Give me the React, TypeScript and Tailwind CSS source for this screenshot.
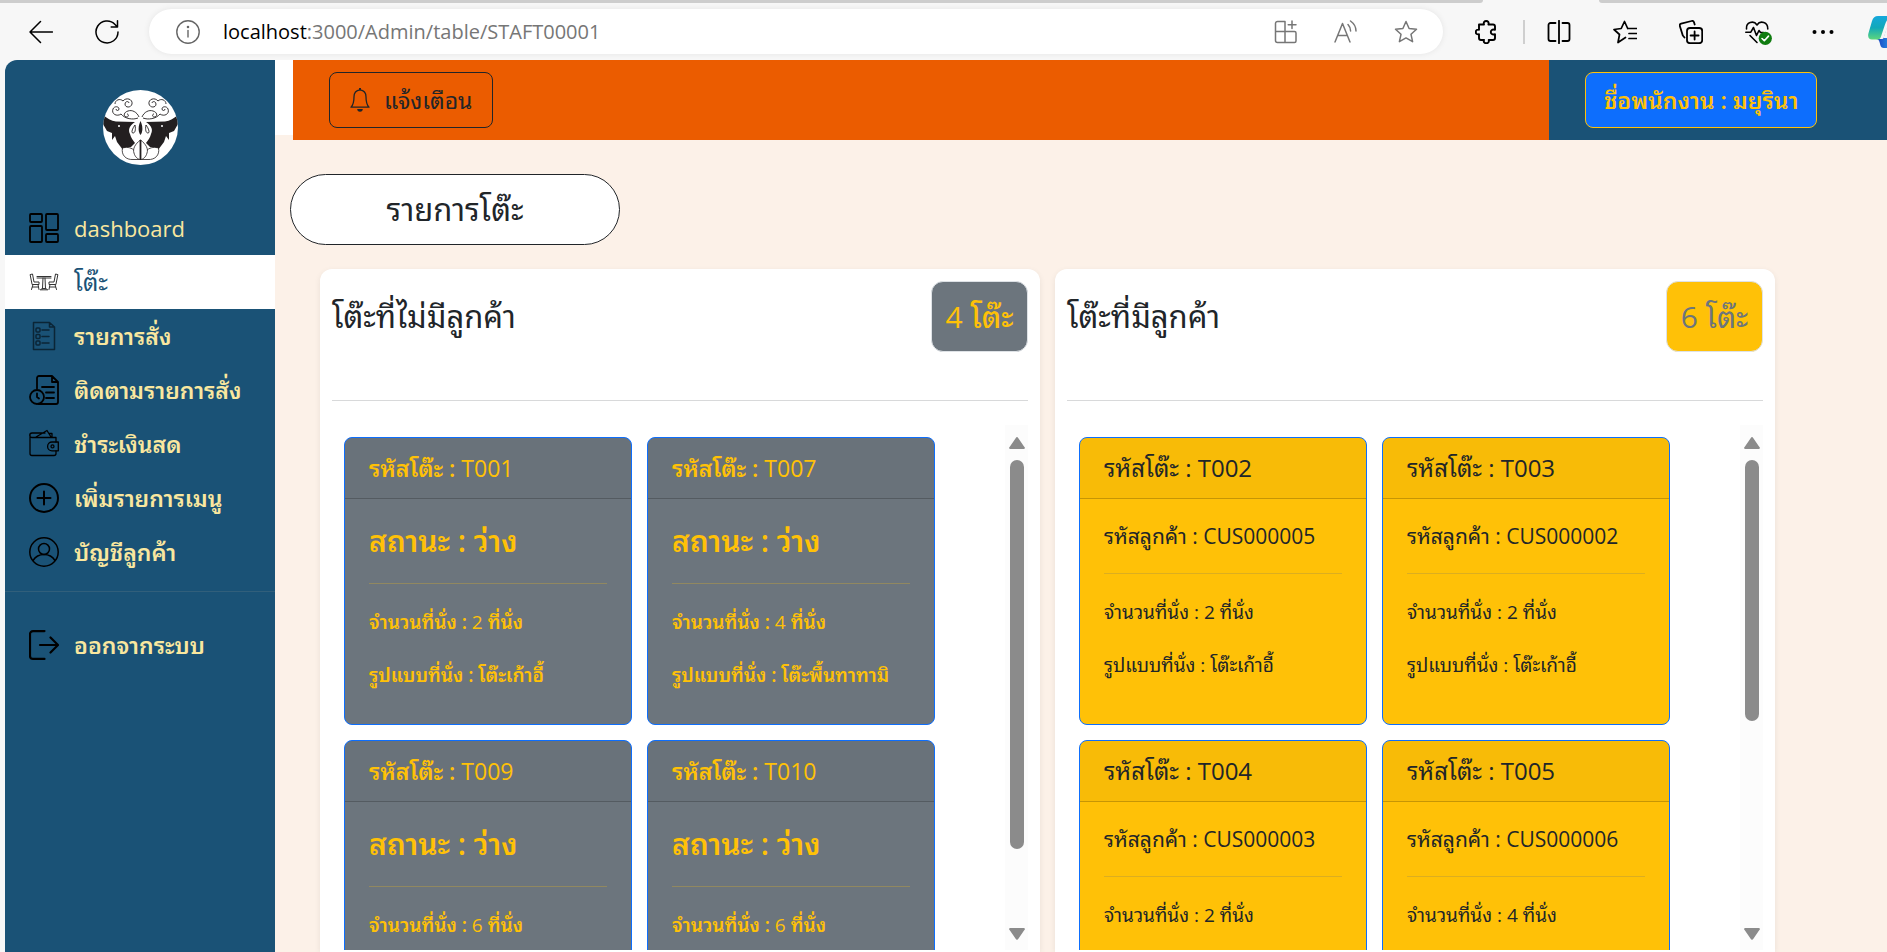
import type { ReactNode } from "react";

type IconProps = { children: ReactNode; className?: string; viewBox?: string; width?: number };

function Icon({ children, className = "size-6", viewBox = "0 0 24 24", width = 1.5 }: IconProps) {
  return (
    <svg
      className={`shrink-0 ${className}`}
      viewBox={viewBox}
      fill="none"
      stroke="currentColor"
      strokeWidth={width}
      strokeLinecap="round"
      strokeLinejoin="round"
      aria-hidden="true"
    >
      {children}
    </svg>
  );
}

const STAR = "M12 1.5l3.100 7 7.400.800-5.500 5 1.600 7.400-6.600-3.800-6.600 3.800 1.600-7.400-5.500-5 7.400-.800z";

function ToolButton({ label, children, className = "" }: { label: string; children: ReactNode; className?: string }) {
  return (
    <button type="button" aria-label={label} className={`flex shrink-0 ${className}`}>
      {children}
    </button>
  );
}

function BrowserBar() {
  return (
    <header className="shrink-0 bg-[#f7f7f7]">
      <div className="flex h-[3px] bg-[#f7f7f7]">
        <div className="flex-1 rounded-br-[3px] bg-[#cdcdcd]" />
        <div className="w-[116px]" />
        <div className="w-[288px] rounded-bl-[3px] bg-[#cdcdcd]" />
      </div>
      <div className="flex h-[57px] items-center overflow-hidden text-black">
        <div className="flex gap-[42px] pr-[30px] pl-[29px]">
          <ToolButton label="Back">
            <Icon>
              <path d="M23.500 12H1M11.500 1.500 1 12l10.500 10.500" />
            </Icon>
          </ToolButton>
          <ToolButton label="Refresh">
            <Icon>
              <path d="M23 12A11 11 0 1 1 20 4.400L22.500 7M22.500.800V7h-6.300" />
            </Icon>
          </ToolButton>
        </div>
        <div className="flex h-[45px] min-w-0 flex-1 items-center rounded-full bg-white pr-[25px] pl-[27px] shadow-[0_0_6px_rgba(0,0,0,0.08)]">
          <Icon className="size-6 text-[#666]" width={1.4}>
            <circle cx="12" cy="12" r="11.200" />
            <path d="M12 10.500v6.500" />
            <circle cx="12" cy="7" r=".600" fill="currentColor" />
          </Icon>
          <p className="ml-[23px] min-w-0 flex-1 truncate text-[20px] text-[#767676]">
            <span className="text-black">localhost</span>:3000/Admin/table/STAFT00001
          </p>
          <div className="flex gap-9 text-[#767676]">
            <ToolButton label="Apps">
              <Icon>
                <path d="M1.500 11.500V3.500a2 2 0 0 1 2-2H11v21H3.500a2 2 0 0 1-2-2v-9H20.500a1.500 1.500 0 0 1 1.500 1.500v8a1.500 1.500 0 0 1-1.500 1.500H11M18 1v7.500M14.200 4.700h7.800" />
              </Icon>
            </ToolButton>
            <ToolButton label="Read aloud">
              <Icon>
                <path d="M1 22 8.500 3.500 16 22M3.700 15.500h9.600M14 4.500c1.700 1.800 2.600 4 2.600 6.500M16.500 1c3.500 2.500 5.500 6 5.500 10" />
              </Icon>
            </ToolButton>
            <ToolButton label="Favorite">
              <Icon>
                <path d={STAR} />
              </Icon>
            </ToolButton>
          </div>
        </div>
        <div className="flex items-center pl-8">
          <ToolButton label="Extensions">
            <Icon width={1.900}>
              <path d="M4 4.500h5c-.8-2.200.6-3.500 2.200-3.500s3 1.300 2.200 3.500H18a2 2 0 0 1 2 2v3.300c-2.800-.9-4.200.5-4.200 2.200s1.400 3.100 4.200 2.200V18a2 2 0 0 1-2 2h-4.300c.7 2-.7 3.300-2.400 3.300S8.200 22 9 20H6a2 2 0 0 1-2-2v-3.700C1.800 14.800.8 13.500.8 12S1.800 9.200 4 9.700z" />
            </Icon>
          </ToolButton>
          <div className="mr-[22px] ml-6 h-6 w-0.5 bg-[#cfcfcf]" />
          <div className="flex gap-[42px]">
            <ToolButton label="Split screen">
              <Icon width={1.800}>
                <path d="M12 .800v22.400M8.500 3H3.500a2 2 0 0 0-2 2v14a2 2 0 0 0 2 2h5M15.500 3h5a2 2 0 0 1 2 2v14a2 2 0 0 1-2 2h-5" />
              </Icon>
            </ToolButton>
            <ToolButton label="Favorites list">
              <Icon width={1.700}>
                <path d="M12.500 17.500 5 22.500l1.500-8L1 9.500l7.200-1L11.500 1.500l3.200 7M15.500 8.500h8M16 13.500h7.500M16 18.500h7.500" />
              </Icon>
            </ToolButton>
            <ToolButton label="Collections">
              <Icon width={1.800}>
                <rect x="8" y="8" width="15.200" height="15.200" rx="3" />
                <path d="M15.600 11.500v8M11.600 15.500h8M5.500 17.500 3.800 15.500.900 6.200a2 2 0 0 1 1.300-2.500L12.500 1a2 2 0 0 1 2.500 1.300L15.700 4.500" />
              </Icon>
            </ToolButton>
            <ToolButton label="Browser essentials">
              <Icon className="size-6 overflow-visible" width={1.600}>
                <path d="M1.500 9C.8 2.500 8.500-.2 12 5c3.500-5.200 11-2.500 10.800 4M.800 12.200h5L8.500 7.500l3 8 2.500-5 1.500 2h3M5 15.500l7 7" />
                <circle cx="20.300" cy="18.300" r="6.600" fill="#107c10" stroke="none" />
                <path d="m17 18.500 2.300 2.200 4.200-4.600" stroke="#fff" />
              </Icon>
            </ToolButton>
            <ToolButton label="Settings and more">
              <svg className="size-6" viewBox="0 0 24 24" aria-hidden="true">
                <circle cx="3.500" cy="12" r="2" />
                <circle cx="12" cy="12" r="2" />
                <circle cx="20.500" cy="12" r="2" />
              </svg>
            </ToolButton>
          </div>
          <ToolButton label="Copilot" className="ml-[33px] w-[19px] overflow-hidden">
            <svg className="h-8 w-10 shrink-0" viewBox="0 0 40 32" aria-hidden="true">
              <defs>
                <linearGradient id="wing" x1="0" y1="0" x2="0" y2="1">
                  <stop offset="0" stopColor="#16a7dc" />
                  <stop offset="0.500" stopColor="#12a9b9" />
                  <stop offset="1" stopColor="#5dd67c" />
                </linearGradient>
                <linearGradient id="tail" x1="0" y1="0" x2="1" y2="0">
                  <stop offset="0" stopColor="#1b3fbf" />
                  <stop offset="1" stopColor="#2aa8f0" />
                </linearGradient>
              </defs>
              <path d="M8 23c2 0 3 1 3.500 3l.8 3c.5 2 1.500 3 3.500 3H27V12h-8l-3 9c-.5 1.500-1 2-2.500 2z" fill="url(#tail)" />
              <path d="M10 0h18l-7 2.500c-2 1-3 3-4 6l-4 12c-.5 1.800-1.500 3-3.500 3H4c-3 0-4.500-2-3.600-6L4 5c1-3.500 3-5 6-5z" fill="url(#wing)" />
              <path d="m19.500 9-4 13h12V9z" fill="#f7f7f7" />
            </svg>
          </ToolButton>
        </div>
      </div>
    </header>
  );
}

function Logo() {
  const half = (
    <g>
      <path
        d="M0 25C4 28 8 31 13 31.500L32 32C26 36 25 40 27 44 28 48 30 50 32 53L28 57C24 57 21 58 20 60L14 52 12 46 9 50 9 43 4 41 0 34z"
        fill="#231f20"
      />
      <circle cx="16" cy="36" r="1" fill="#fff" />
      <g fill="none" stroke="#231f20" strokeWidth=".900">
        <path d="M36 27C34 22 29 19.500 25 21c-4 1-5 5-2 6 3 .5 3-3 1-3M35 28C30 30 22 29 18 24c-4 3-10 0-8-5 1-3 6-3 6 0 0 2-3 2-3 0M12 14c0-4 5-6 8-3 3-4 10-2 9 3-1 4-7 4-7 0 0-3 4-3 4-1" />
        <path d="M32 35c-3 4-4 8-2 8s3-3 2-8z" />
      </g>
      <g fill="#fff" stroke="#231f20" strokeWidth=".800">
        <path d="M19.500 58C18 65 23 70 30 69.500L37 69.500 31 60C27 57 23 57 19.500 58z" />
        <path d="M37.500 50C32 54 29.500 59 31 63c1 4 4 6.500 6.500 6.500" />
      </g>
    </g>
  );
  return (
    <svg className="size-[75px]" viewBox="0 0 75 75" role="img" aria-label="Logo">
      <defs>
        <clipPath id="disc">
          <circle cx="37.500" cy="37.500" r="37.500" />
        </clipPath>
      </defs>
      <g clipPath="url(#disc)">
        <rect width="75" height="75" fill="#fff" />
        {half}
        <g transform="matrix(-1 0 0 1 75 0)">{half}</g>
        <path d="M37.500 31c-2.500 5-2.500 11 0 14 2.500-3 2.500-9 0-14z" fill="#231f20" />
        <path d="M37.500 50v20" stroke="#231f20" strokeWidth="1.800" />
      </g>
    </svg>
  );
}

const navIcons: Record<string, ReactNode> = {
  dashboard: (
    <Icon className="size-[30px]" viewBox="0 0 30 30" width={1.800}>
      <rect x="1" y="1" width="12" height="8" rx="1" />
      <rect x="17" y="1" width="12" height="16" rx="1" />
      <rect x="1" y="13" width="12" height="16" rx="1" />
      <rect x="17" y="21" width="12" height="8" rx="1" />
    </Icon>
  ),
  table: (
    <Icon className="size-[30px] text-[#333]" viewBox="0 0 30 30" width={1}>
      <path d="M1.500 7.500 3.500 7l1.500 8h5v2.500H3.500zM28.500 7.500l-2-.5-1.500 8h-5v2.500h6.500zM4 17.500l-1.500 5M9 17.500l1 5M3.500 20h6M26 17.500l1.500 5M21 17.500l-1 5M20.500 20h6" />
      <path d="M8 9.500h14M8 11h14M14 11l-.500 10.500M16 11l.500 10.500M11.500 22.500c1-1.500 6-1.500 7 0z" />
    </Icon>
  ),
  orders: (
    <Icon className="size-[30px] text-[#0b2536]" viewBox="0 0 30 30" width={1.500}>
      <path d="M4.500 1.500h16L25.500 6v22.500h-21zM20.500 1.500V6h5M13 9h7M13 15.500h7M13 22h7" />
      <rect x="7" y="7" width="4" height="4" rx="1" />
      <rect x="7" y="13.500" width="4" height="4" rx="1" />
      <rect x="7" y="20" width="4" height="4" rx="1" />
    </Icon>
  ),
  track: (
    <Icon className="size-[30px]" viewBox="0 0 30 30" width={1.800}>
      <path d="M8 13.500V3a2 2 0 0 1 2-2h13l6 6v20a2 2 0 0 1-2 2H9.500M23 1v6h6M13 12h12M17 17.500h8M17 23h8" />
      <circle cx="8" cy="22" r="7" />
      <path d="M8 18.500V22l2 1.500" />
    </Icon>
  ),
  cash: (
    <Icon className="size-[30px]" viewBox="0 0 30 30" width={1.300}>
      <path d="M27 13V8.500H3a2 2 0 0 1 0-4.500h13M1 6v18.500a2 2 0 0 0 2 2h22a2 2 0 0 0 2-2V22M7 8l11-6.500L22 8M20 4.500h3V8" />
      <path d="M29.300 13H23a4.400 4.400 0 0 0 0 8.800h6.300z" />
      <circle cx="23.500" cy="17.400" r="1.500" />
    </Icon>
  ),
  add: (
    <Icon className="size-[30px]" viewBox="0 0 30 30" width={2}>
      <circle cx="15" cy="15" r="14" />
      <path d="M15 8.500v13M8.500 15h13" />
    </Icon>
  ),
  account: (
    <Icon className="size-[30px]" viewBox="0 0 30 30" width={1.500}>
      <circle cx="15" cy="15" r="14.200" />
      <circle cx="15" cy="12" r="5.500" />
      <path d="M4 23.500c5-8 17-8 22 0" />
    </Icon>
  ),
  logout: (
    <Icon className="size-[30px]" viewBox="0 0 30 30" width={2.200}>
      <path d="M15.500 1.100H4a3 3 0 0 0-3 3v21.800a3 3 0 0 0 3 3h11.500M11 15h18M21.500 7.500 29 15l-7.500 7.500" />
    </Icon>
  ),
};

function NavLink({ icon, label, className }: { icon: string; label: string; className: string }) {
  return (
    <a href="#" className={`flex h-[54px] items-center gap-[15px] pl-6 ${className}`}>
      <span className="text-black">{navIcons[icon]}</span>
      {label}
    </a>
  );
}

const navItem = "text-[23px] font-semibold text-[#f9e79f]";

function Sidebar() {
  return (
    <aside className="w-[270px] shrink-0 rounded-tl-xl bg-[#1a5276] pt-[30px]">
      <div className="flex justify-center">
        <Logo />
      </div>
      <nav className="mt-9">
        <NavLink icon="dashboard" label="dashboard" className="text-[22px] text-[#f9e79f]" />
        <NavLink icon="table" label="โต๊ะ" className="bg-white text-[24px] text-[#1a5276]" />
        <NavLink icon="orders" label="รายการสั่ง" className={navItem} />
        <NavLink icon="track" label="ติดตามรายการสั่ง" className={navItem} />
        <NavLink icon="cash" label="ชำระเงินสด" className={navItem} />
        <NavLink icon="add" label="เพิ่มรายการเมนู" className={navItem} />
        <NavLink icon="account" label="บัญชีลูกค้า" className={navItem} />
        <hr className="mt-3 mb-[26px] border-[#315f7b]" />
        <NavLink icon="logout" label="ออกจากระบบ" className={navItem} />
      </nav>
    </aside>
  );
}

type DiningTable = { id: string; seats: number; style?: string; customer?: string };

const freeTables: DiningTable[] = [
  { id: "T001", seats: 2, style: "โต๊ะเก้าอี้" },
  { id: "T007", seats: 4, style: "โต๊ะพื้นทาทามิ" },
  { id: "T009", seats: 6 },
  { id: "T010", seats: 6 },
];

const busyTables: DiningTable[] = [
  { id: "T002", seats: 2, style: "โต๊ะเก้าอี้", customer: "CUS000005" },
  { id: "T003", seats: 2, style: "โต๊ะเก้าอี้", customer: "CUS000002" },
  { id: "T004", seats: 2, customer: "CUS000003" },
  { id: "T005", seats: 4, customer: "CUS000006" },
];

function TableCard({ table }: { table: DiningTable }) {
  const busy = table.customer !== undefined;
  const weight = busy ? "font-normal" : "font-semibold";
  return (
    <article
      className={`min-h-[288px] w-[288px] overflow-hidden rounded-lg border border-[#0d6efd] ${
        busy ? "bg-[#ffc107] text-[#212529]" : "bg-[#6c757d] text-[#ffc107]"
      }`}
    >
      <h3
        className={`border-b border-black/20 bg-[#212529]/3 px-6 py-[15px] leading-[30px] ${
          busy ? "text-[24px]" : "text-[23px]"
        }`}
      >
        <span className={weight}>รหัสโต๊ะ :</span> {table.id}
      </h3>
      <div className="p-6">
        {busy ? (
          <p className="text-[21px] leading-[26px] whitespace-nowrap">
            รหัสลูกค้า : <span className="font-medium">{table.customer}</span>
          </p>
        ) : (
          <p className="text-[30px] leading-9 font-semibold">สถานะ : ว่าง</p>
        )}
        <hr className={`my-6 ${busy ? "border-[#dcae20]" : "border-[#918860]"}`} />
        <p className="text-[19px] leading-[29px] whitespace-nowrap">
          <span className={weight}>จำนวนที่นั่ง :</span> {table.seats} <span className={weight}>ที่นั่ง</span>
        </p>
        {table.style && (
          <p className={`mt-6 text-[19px] leading-[29px] whitespace-nowrap ${weight}`}>
            รูปแบบที่นั่ง : {table.style}
          </p>
        )}
      </div>
    </article>
  );
}

function ScrollTrack({ thumb }: { thumb: string }) {
  return (
    <div className="flex w-[23px] shrink-0 flex-col items-center bg-[#fcfcfc] pt-3 pb-2.5" aria-hidden="true">
      <svg className="h-3 w-4 shrink-0" viewBox="0 0 16 12" fill="#8b8b8b">
        <path d="M6.800.900a1.500 1.500 0 0 1 2.400 0l6 8.800A1.300 1.300 0 0 1 14 12H2A1.300 1.300 0 0 1 .8 9.700z" />
      </svg>
      <div className="mt-[11px] mb-2.5 flex min-h-0 w-3.5 flex-1 flex-col">
        <div className={`rounded-full bg-[#8b8b8b] ${thumb}`} />
      </div>
      <svg className="h-3 w-4 shrink-0" viewBox="0 0 16 12" fill="#8b8b8b">
        <path d="M6.800 11.100a1.500 1.500 0 0 0 2.400 0l6-8.800A1.300 1.300 0 0 0 14 0H2A1.300 1.300 0 0 0 .8 2.300z" />
      </svg>
    </div>
  );
}

type PanelProps = { title: string; count: number; badge: string; thumb: string; tables: DiningTable[] };

function Panel({ title, count, badge, thumb, tables }: PanelProps) {
  return (
    <section className="flex min-h-0 flex-col rounded-t-xl bg-white px-3 pt-3 pb-0.5 shadow-[0_2px_6px_rgba(0,0,0,0.075)]">
      <div className="flex items-center justify-between border-b border-[#d8d9da] pb-12 text-[#212529]">
        <h2 className="text-[31px]">{title}</h2>
        <span
          className={`flex h-[71px] w-[97px] items-center justify-center rounded-xl border border-[#dee2e6] text-[30px] whitespace-nowrap ${badge}`}
        >
          {count} โต๊ะ
        </span>
      </div>
      <div className="mt-6 flex min-h-0 flex-1">
        <div className="flex flex-1 flex-wrap content-start gap-[15px] overflow-hidden pt-3 pl-3">
          {tables.map((table) => (
            <TableCard key={table.id} table={table} />
          ))}
        </div>
        <ScrollTrack thumb={thumb} />
      </div>
    </section>
  );
}

function TopBar() {
  return (
    <div className="flex shrink-0">
      <div className="h-[75px] w-[18px] bg-white" />
      <div className="flex h-20 flex-1 items-center bg-[#eb5c00] pl-9">
        <button
          type="button"
          className="flex h-14 items-center gap-3.5 rounded-lg border border-[#212529] px-5 text-[23px] text-[#212529]"
        >
          <svg className="h-6 w-5" viewBox="0 0 20 24" fill="none" stroke="currentColor" strokeWidth="1.300" aria-hidden="true">
            <path d="M10 1.800c-4 .5-6 3.500-6 7 0 5-1 8.500-3 10.400h18c-2-1.900-3-5.400-3-10.400 0-3.500-2-6.500-6-7z" strokeLinejoin="round" />
            <path d="M7.200 21h5.600c0 1.500-1 2.700-2.800 2.700S7.200 22.500 7.200 21zM9 0h2v2H9z" fill="currentColor" stroke="none" />
          </svg>
          แจ้งเตือน
        </button>
      </div>
      <div className="flex h-20 w-[338px] items-center bg-[#1a5276] pl-9">
        <button
          type="button"
          className="h-14 rounded-lg border border-[#ffc107] bg-[#0d6efd] px-[18px] text-[23px] font-semibold text-[#ffc107]"
        >
          ชื่อพนักงาน : มยุรินา
        </button>
      </div>
    </div>
  );
}

export default function App() {
  return (
    <div className="flex h-screen flex-col overflow-hidden bg-[#f7f7f7] font-['Open_Sans','Noto_Sans_Thai_Looped',sans-serif]">
      <BrowserBar />
      <div className="flex min-h-0 flex-1 pl-[5px]">
        <Sidebar />
        <main className="flex min-w-0 flex-1 flex-col bg-[#fcf1e8]">
          <TopBar />
          <h1 className="mt-[34px] ml-[15px] flex h-[71px] w-[330px] shrink-0 items-center justify-center rounded-full border border-[#212529] bg-white text-[31px] text-[#212529]">
            รายการโต๊ะ
          </h1>
          <div className="mt-6 grid min-h-0 flex-1 grid-cols-2 gap-[15px] pr-28 pl-[45px]">
            <Panel
              title="โต๊ะที่ไม่มีลูกค้า"
              count={4}
              badge="bg-[#6c757d] font-medium text-[#ffc107]"
              thumb="h-[85%]"
              tables={freeTables}
            />
            <Panel
              title="โต๊ะที่มีลูกค้า"
              count={6}
              badge="bg-[#ffc107] text-[#6c757d]"
              thumb="h-[57%]"
              tables={busyTables}
            />
          </div>
        </main>
      </div>
    </div>
  );
}
